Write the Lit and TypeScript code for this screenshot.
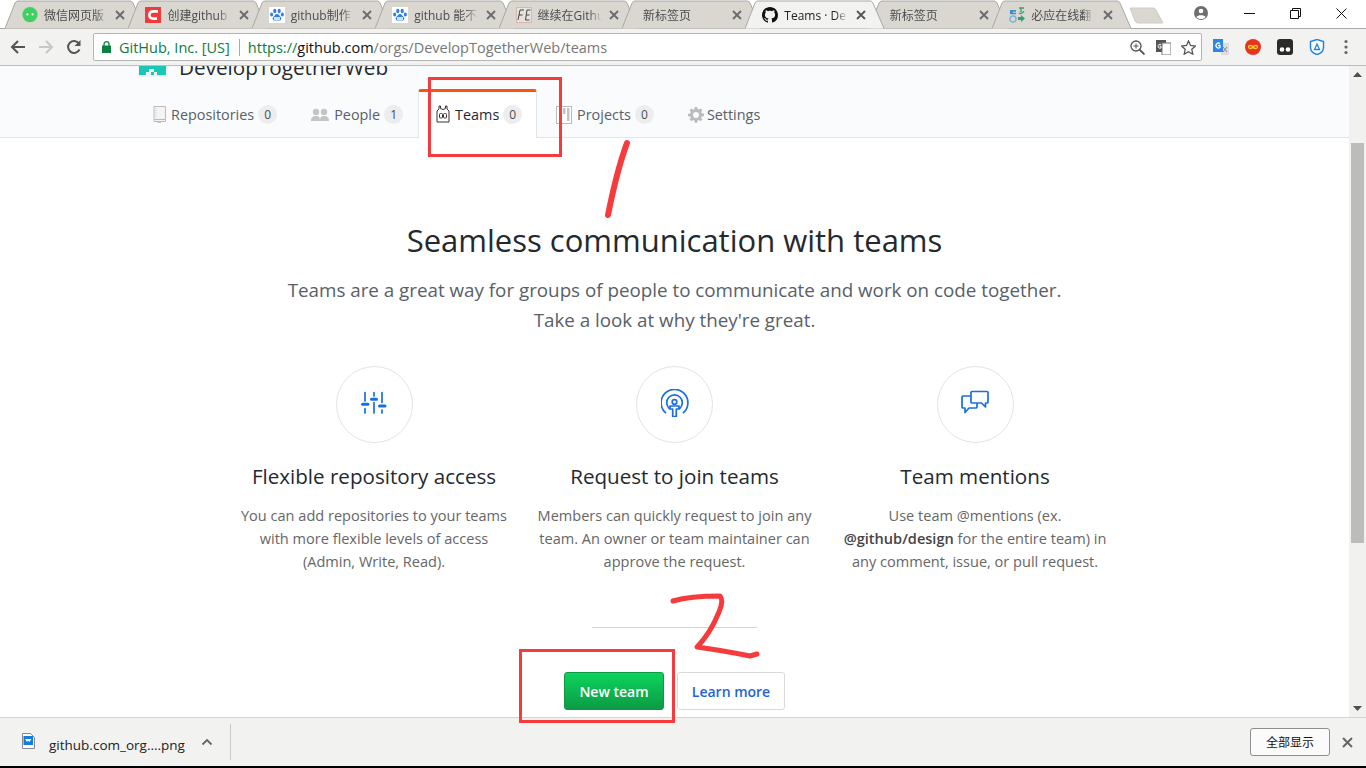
import { LitElement, html, css, svg } from "lit";
import { customElement } from "lit/decorators.js";

const tabs = [
  { title: "微信网页版", icon: "wechat" },
  { title: "创建github", icon: "csdn" },
  { title: "github制作", icon: "baidu" },
  { title: "github 能不", icon: "baidu" },
  { title: "继续在Github", icon: "fe" },
  { title: "新标签页", icon: "" },
  { title: "Teams · De", icon: "github", active: true },
  { title: "新标签页", icon: "" },
  { title: "必应在线翻", icon: "bing" },
];

const features = [
  {
    icon: "sliders",
    title: "Flexible repository access",
    lines: [
      "You can add repositories to your teams",
      "with more flexible levels of access",
      "(Admin, Write, Read).",
    ],
  },
  {
    icon: "person",
    title: "Request to join teams",
    lines: [
      "Members can quickly request to join any",
      "team. An owner or team maintainer can",
      "approve the request.",
    ],
  },
  {
    icon: "chat",
    title: "Team mentions",
    lines: [
      "Use team @mentions (ex.",
      html`<b>@github/design</b> for the entire team) in`,
      "any comment, issue, or pull request.",
    ],
  },
];

function favicon(name: string) {
  switch (name) {
    case "wechat":
      return html`<svg width="16" height="16" viewBox="0 0 16 16"><circle cx="8" cy="7.6" r="7.6" fill="#3fd15f"/><path d="M3 14l1-4 3 3z" fill="#3fd15f"/><circle cx="5.4" cy="7.4" r="1.1" fill="#fff"/><circle cx="10.6" cy="7.4" r="1.1" fill="#fff"/></svg>`;
    case "csdn":
      return html`<svg width="16" height="16" viewBox="0 0 16 16"><rect width="16" height="16" fill="#ee3b3b"/><path d="M13 4.4H8.5C6 4.4 4.4 6 4.4 8s1.6 3.6 4.1 3.6H12" fill="none" stroke="#fff" stroke-width="2.6"/></svg>`;
    case "baidu":
      return html`<svg width="16" height="16" viewBox="0 0 16 16"><rect width="16" height="16" fill="#fff"/><g fill="#2f7fe6"><ellipse cx="5.8" cy="4" rx="1.6" ry="2.2"/><ellipse cx="10.2" cy="4" rx="1.6" ry="2.2"/><ellipse cx="2.6" cy="7.6" rx="1.5" ry="2"/><ellipse cx="13.4" cy="7.6" rx="1.5" ry="2"/><path d="M8 7c-2 0-2.4 2-3.6 3-1.4 1.2-.6 3.8 1.6 3.6 1-.1 1.400-.4 2-.4s1 .3 2 .4c2.200.2 3-2.400 1.600-3.600C10.400 9 10 7 8 7z"/></g><rect x="5" y="10" width="6" height="3" fill="#cfe2fa"/></svg>`;
    case "fe":
      return html`<svg width="16" height="16" viewBox="0 0 16 16"><rect x=".5" y=".5" width="15" height="15" fill="#e6e2dc" stroke="#d8b5ae"/><path d="M2 13L4 3h4M3 8h3.500M9.500 13l1.500-10h3.500M10.500 8h3M9.500 13h4" fill="none" stroke="#444" stroke-width="1"/></svg>`;
    case "github":
      return html`<svg width="16" height="16" viewBox="0 0 16 16"><path fill="#111" d="M8 0C3.580 0 0 3.580 0 8c0 3.540 2.290 6.530 5.470 7.590.4.070.55-.170.55-.380 0-.190-.010-.820-.010-1.490-2.010.370-2.530-.490-2.690-.940-.090-.230-.480-.940-.820-1.130-.280-.150-.680-.520-.010-.530.630-.010 1.080.580 1.230.820.720 1.210 1.870.870 2.330.660.070-.520.280-.870.510-1.070-1.780-.200-3.640-.890-3.640-3.950 0-.870.310-1.590.820-2.150-.080-.200-.360-1.020.080-2.120 0 0 .670-.210 2.200.820.640-.180 1.320-.270 2-.270s1.360.090 2 .270c1.530-1.040 2.200-.820 2.200-.820.440 1.100.160 1.920.080 2.120.510.560.820 1.270.820 2.150 0 3.070-1.870 3.750-3.650 3.950.290.250.540.730.540 1.480 0 1.070-.010 1.930-.010 2.200 0 .210.150.460.550.380A8.010 8.010 0 0 0 16 8c0-4.420-3.580-8-8-8z"/></svg>`;
    case "bing":
      return html`<svg width="16" height="16" viewBox="0 0 16 16"><path d="M1 3h6v1.800H4v1h3v1.500H1z" fill="#3f8fd0"/><circle cx="4" cy="12" r="3" fill="none" stroke="#7fb5d8" stroke-width="1.500"/><path d="M10 1h5M12 1v4M10 6c2 1 4 0 5-2" fill="none" stroke="#35a06a" stroke-width="1.300"/><path d="M9 10h3V8l4 3.500-4 3.500v-2H9z" fill="#35a06a"/></svg>`;
  }
  return "";
}

const featureIcons: Record<string, unknown> = {
  sliders: svg`<g stroke="#1a6fdf" stroke-width="1.700" stroke-linecap="round" fill="none">
    <path d="M5 3.500V12M5 19.500V24M14 3.500V7M14 13.500V24M22 3.500V13.500M22 21V24"/>
    <path stroke-width="3" d="M2.500 15.300h5.500M11.500 10.300h5M19.500 17h5.500"/></g>`,
  person: svg`<g stroke="#1a6fdf" stroke-width="1.700" fill="none" stroke-linecap="round">
    <path d="M4.500 23.700A13.400 13.400 0 1 1 22.500 23.700"/>
    <path d="M8.300 19.500A7.800 7.800 0 1 1 18.700 19.500"/>
    <circle cx="13.500" cy="13" r="2.300"/>
    <path stroke-linejoin="round" d="M9 17h9v3h-2.700v7.500h-3.600v-7.500H9z" fill="#fff"/></g>`,
  chat: svg`<g stroke="#1a6fdf" stroke-width="1.700" fill="#fff" stroke-linejoin="round">
    <path d="M2 7h13a1 1 0 0 1 1 1v10a1 1 0 0 1-1 1H8l-4 4.500V19H2a1 1 0 0 1-1-1V8a1 1 0 0 1 1-1z"/>
    <path d="M11 2.500h15a1 1 0 0 1 1 1v9.500a1 1 0 0 1-1 1h-1.500v4l-4-4H11a1 1 0 0 1-1-1V3.500a1 1 0 0 1 1-1z"/></g>`,
};

@customElement("app-root")
export class AppRoot extends LitElement {
  static styles = css`
    :host {
      display: block;
      position: relative;
      width: 1366px;
      height: 768px;
      overflow: hidden;
      background: #fff;
      font-family: "Open Sans", "Noto Sans CJK SC", sans-serif;
    }
    .frame {
      display: flex;
      flex-direction: column;
      height: 768px;
    }

    /* tab strip */
    .strip {
      height: 28px;
      display: flex;
      padding-left: 11px;
      position: relative;
      flex: none;
    }
    .tab {
      position: relative;
      width: 123.4px;
      height: 28px;
      flex: none;
      display: flex;
      align-items: center;
      font-size: 12px;
      color: #4c4c4c;
    }
    .tab.active {
      color: #222;
      z-index: 2;
    }
    .shape {
      position: absolute;
      left: -6px;
      top: 0;
    }
    .fav {
      position: relative;
      width: 16px;
      height: 16px;
      margin-left: 11px;
      margin-right: 6px;
      margin-top: 2px;
    }
    .fav.none {
      width: 0;
      margin-right: 0;
    }
    .tab-title {
      position: relative;
      width: 64px;
      white-space: nowrap;
      overflow: hidden;
      margin-top: 2px;
      -webkit-mask-image: linear-gradient(90deg, #000 80%, transparent);
      mask-image: linear-gradient(90deg, #000 80%, transparent);
    }
    .fav.none + .tab-title {
      width: 86px;
      margin-left: 4px;
    }
    .tab-x {
      position: absolute;
      right: 9px;
      top: 10px;
    }
    .new-tab {
      margin: 7px 0 0 7px;
    }
    .win {
      position: absolute;
      top: 0;
      right: 2px;
      display: flex;
      align-items: center;
      height: 26px;
    }
    .win-btn {
      width: 46px;
      display: flex;
      justify-content: center;
    }
    .avatar {
      margin-right: 17px;
    }

    /* toolbar */
    .bar {
      height: 38px;
      flex: none;
      display: flex;
      align-items: center;
      background: #f2f2f0;
      border-top: 1px solid #a9a8a4;
      border-bottom: 1px solid #bdbdbb;
      box-sizing: border-box;
      padding-left: 10px;
    }
    .nav {
      display: flex;
      gap: 12px;
      width: 83px;
      align-items: center;
    }
    .omni {
      width: 1109px;
      height: 28px;
      box-sizing: border-box;
      background: #fff;
      border: 1px solid #b5b5b3;
      border-radius: 2px;
      display: flex;
      align-items: center;
      font-size: 14.5px;
      padding-left: 8px;
      white-space: nowrap;
    }
    .secure {
      color: #0b7d3e;
      margin-left: 8px;
    }
    .sep {
      width: 1px;
      height: 17px;
      background: #aaa;
      margin: 0 8px 0 9px;
    }
    .url {
      color: #0b7d3e;
    }
    .url b {
      font-weight: 400;
      color: #111;
    }
    .url span {
      color: #777;
    }
    .omni-icons {
      margin-left: auto;
      display: flex;
      align-items: center;
      gap: 10.5px;
      padding-right: 5px;
    }
    .exts {
      display: flex;
      align-items: center;
      gap: 16px;
      margin-left: 11px;
    }
    .menu {
      margin-left: 3px;
    }

    /* page */
    .viewport {
      flex: 1;
      display: flex;
      min-height: 0;
    }
    .page {
      flex: 1;
      overflow: hidden;
      color: #24292e;
    }
    .orghead {
      height: 72px;
      box-sizing: border-box;
      background: #fafbfc;
      border-bottom: 1px solid #e1e4e8;
      padding-left: 138px;
      display: flex;
      flex-direction: column;
    }
    .orgname {
      display: flex;
      gap: 11px;
      height: 23px;
      overflow: hidden;
      font-size: 20.7px;
      line-height: 28px;
      flex: none;
    }
    .orgname svg {
      flex: none;
      margin-left: -1px;
    }
    .orgname span {
      margin-top: -13px;
      height: 30px;
    }
    .orgtabs {
      display: flex;
      height: 48px;
      flex: none;
    }
    .otab {
      display: flex;
      align-items: center;
      gap: 5px;
      font-size: 14.4px;
      color: #586069;
      padding: 3px 0 0 14px;
      margin-right: 20px;
      white-space: nowrap;
    }
    .otab:first-child {
      padding-left: 15px;
    }
    .otab.sel {
      background: #fff;
      border: 1px solid #e1e4e8;
      border-top: 3px solid #f9540b;
      border-bottom: 0;
      border-radius: 3px 3px 0 0;
      color: #24292e;
      width: 119px;
      box-sizing: border-box;
      height: 49px;
      padding: 0 0 2px 17px;
      margin: 0 5px 0 -5px;
    }
    .otab svg {
      flex: none;
    }
    .gear {
      margin-right: -2px;
    }
    .count {
      min-width: 19px;
      height: 19px;
      box-sizing: border-box;
      border-radius: 10px;
      background: #ededed;
      font-size: 12px;
      line-height: 19px;
      text-align: center;
      margin-left: -1px;
      color: #444d56;
    }
    .blank {
      text-align: center;
    }
    h1 {
      margin: 0;
      padding-top: 82px;
      font-size: 31px;
      font-weight: 400;
      line-height: 40px;
    }
    .lead {
      margin: 15px 0 0;
      font-size: 18.8px;
      line-height: 30px;
      color: #586069;
    }
    .features {
      display: flex;
      justify-content: center;
      margin-top: 31px;
    }
    .feature {
      width: 300.5px;
    }
    .circle {
      width: 77px;
      height: 77px;
      box-sizing: border-box;
      margin: 0 auto;
      border: 1px solid #e1e4e8;
      border-radius: 50%;
      display: flex;
      align-items: center;
      justify-content: center;
    }
    .circle svg {
      margin-bottom: 3px;
    }
    h3 {
      margin: 18px 0 0;
      font-size: 20.6px;
      font-weight: 400;
      line-height: 30px;
    }
    .desc {
      margin: 13px 0 0;
      font-size: 14.55px;
      line-height: 23px;
      color: #666;
      white-space: nowrap;
    }
    .desc b {
      font-weight: 600;
      color: #444;
    }
    hr {
      width: 165px;
      margin: 54px auto 0;
      border: 0;
      border-top: 1px solid #d1d5da;
    }
    .actions {
      display: flex;
      justify-content: center;
      gap: 13px;
      margin-top: 44px;
    }
    .btn {
      height: 38px;
      box-sizing: border-box;
      border-radius: 3px;
      font: 600 14px "Open Sans", sans-serif;
      display: flex;
      align-items: center;
      justify-content: center;
    }
    .primary {
      width: 100px;
      color: #fff;
      background: linear-gradient(#0ed35c, #0b9b45);
      border: 1px solid #0a9a44;
    }
    .secondary {
      width: 108px;
      color: #1f62d6;
      background: #fff;
      border: 1px solid #d8dade;
    }

    .scrollbar {
      width: 17px;
      flex: none;
      background: #f1f1ef;
      display: flex;
      flex-direction: column;
      align-items: center;
    }
    .arrow {
      height: 17px;
      flex: none;
      display: flex;
      align-items: center;
    }
    .thumb {
      width: 13px;
      height: 400px;
      background: #bcbcba;
      margin-top: 60px;
      margin-bottom: auto;
    }

    /* download shelf */
    .shelf {
      height: 51px;
      flex: none;
      box-sizing: border-box;
      background: #f2f2f0;
      border-top: 1px solid #d4d4d2;
      border-bottom: 2px solid #000;
      display: flex;
      align-items: center;
      font-size: 13.5px;
      color: #222;
    }
    .file {
      margin: -2px 0 0 22px;
    }
    .fname {
      margin: 5px 0 0 14px;
      width: 149px;
      white-space: nowrap;
    }
    .chev {
      margin-left: 3px;
    }
    .shelf-sep {
      width: 1px;
      height: 36px;
      background: #c9c9c6;
      margin-left: 17px;
    }
    .showall {
      margin-left: auto;
      width: 80px;
      height: 28px;
      box-sizing: border-box;
      border: 1px solid #8e8e8e;
      border-radius: 3px;
      background: #fbfbfb;
      display: flex;
      align-items: center;
      justify-content: center;
      font-size: 12px;
      color: #111;
    }
    .shelf-x {
      margin: 0 13px 0 12px;
    }

    /* red marks drawn over the screenshot */
    .marks {
      position: absolute;
      inset: 0;
      pointer-events: none;
    }
  `;

  private renderTab(t: (typeof tabs)[number]) {
    const fill = t.active ? "#f2f2f0" : "#dad7d0";
    return html`<div class="tab ${t.active ? "active" : ""}">
      <svg class="shape" width="140" height="29" viewBox="0 0 140 29">
        <path d="M0 28.500 L10 3 Q11 1 13 1 H125 Q127 1 128 3 L139 28.500" fill="${fill}" stroke="#a9a8a4"/>
      </svg>
      <div class="fav ${t.icon ? "" : "none"}">${favicon(t.icon)}</div>
      <div class="tab-title">${t.title}</div>
      <svg class="tab-x" width="10" height="10" viewBox="0 0 10 10">
        <path d="M1 1l8 8M9 1l-8 8" stroke="${t.active ? "#555" : "#6a6a6a"}" stroke-width="1.800"/>
      </svg>
    </div>`;
  }

  render() {
    return html`
      <div class="frame">
        <div class="strip">
          ${tabs.map((t) => this.renderTab(t))}
          <svg class="new-tab" width="36" height="18" viewBox="0 0 36 18">
            <path d="M1 1h23q2 0 3 2l7 13H9q-2 0-3-2z" fill="#dad7d0" stroke="#cfccc6"/>
          </svg>
          <div class="win">
            <svg class="avatar" width="16" height="16" viewBox="0 0 16 16">
              <circle cx="8" cy="8" r="7" fill="#6e6e6e"/>
              <circle cx="8" cy="6" r="2.300" fill="#fff"/>
              <path d="M3.500 12c1-2.200 8-2.200 9 0-1 1.500-2.500 2-4.500 2s-3.500-.500-4.500-2z" fill="#fff"/>
            </svg>
            <div class="win-btn">
              <svg width="11" height="11" viewBox="0 0 11 11"><path d="M0 5.500h11" stroke="#111"/></svg>
            </div>
            <div class="win-btn">
              <svg width="11" height="11" viewBox="0 0 11 11"><path d="M.5 2.500h8v8h-8zM2.500 2.500v-2h8v8h-2" fill="none" stroke="#111"/></svg>
            </div>
            <div class="win-btn">
              <svg width="11" height="11" viewBox="0 0 11 11"><path d="M.5.500l10 10M10.500.500l-10 10" stroke="#111"/></svg>
            </div>
          </div>
        </div>

        <div class="bar">
          <div class="nav">
            <svg width="16" height="16" viewBox="0 0 16 16"><path d="M15 8H2M8 2L2 8l6 6" fill="none" stroke="#555" stroke-width="2"/></svg>
            <svg width="16" height="16" viewBox="0 0 16 16"><path d="M1 8h13M8 2l6 6-6 6" fill="none" stroke="#c8c8c8" stroke-width="2"/></svg>
            <svg width="16" height="16" viewBox="0 0 16 16"><path d="M13.500 10.500A6 6 0 1 1 13 4.500" fill="none" stroke="#555" stroke-width="2"/><path d="M14.500 1v6h-6z" fill="#555"/></svg>
          </div>
          <div class="omni">
            <svg width="9" height="12" viewBox="0 0 9 12"><rect y="4.500" width="9" height="7.500" fill="#0b8043"/><path d="M2 5V3.200a2.500 2.500 0 0 1 5 0V5" fill="none" stroke="#0b8043" stroke-width="1.300"/></svg>
            <span class="secure">GitHub, Inc. [US]</span>
            <i class="sep"></i>
            <span class="url">https://<b>github.com</b><span>/orgs/DevelopTogetherWeb/teams</span></span>
            <div class="omni-icons">
              <svg width="15" height="15" viewBox="0 0 15 15"><circle cx="6" cy="6" r="5" fill="none" stroke="#555" stroke-width="1.300"/><path d="M9.500 9.500l5 5" stroke="#555" stroke-width="1.800"/><path d="M3.500 6h5M6 3.500v5" stroke="#555"/></svg>
              <svg width="15" height="15" viewBox="0 0 15 15"><rect width="10" height="12" fill="#555"/><rect x="6" y="3" width="9" height="12" fill="#fff" stroke="#777"/><path d="M5 4.500a2 2 0 1 0 0 3.500V6.200H3.500" fill="none" stroke="#fff"/></svg>
              <svg width="15" height="15" viewBox="0 0 15 15"><path d="M7.500 1l2 4.500 5 .5-3.700 3.300 1 4.900-4.300-2.500-4.300 2.500 1-4.900L.5 6l5-.5z" fill="none" stroke="#555" stroke-width="1.300"/></svg>
            </div>
          </div>
          <div class="exts">
            <svg width="16" height="16" viewBox="0 0 16 16"><path d="M6 4h10v12H8z" fill="#ddd"/><path d="M10 8l4 5M14 8l-4 5" stroke="#888"/><rect width="10" height="13" fill="#2d85e8"/><path d="M7 4.500a2.500 2.500 0 1 0 0 4V6.500H5" fill="none" stroke="#fff" stroke-width="1.300"/></svg>
            <svg width="16" height="16" viewBox="0 0 16 16"><circle cx="8" cy="8" r="8" fill="#e8331f"/><path d="M8 8c-1-2-4.500-2-4.500 0s3.500 2 4.500 0 4.500-2 4.500 0-3.500 2-4.500 0z" fill="none" stroke="#f9d423" stroke-width="1.300"/></svg>
            <svg width="16" height="16" viewBox="0 0 16 16"><rect width="16" height="16" rx="3" fill="#2b2b2b"/><circle cx="5" cy="10.500" r="2.300" fill="#fff"/><circle cx="11" cy="10.500" r="2.300" fill="#fff"/></svg>
            <svg width="16" height="16" viewBox="0 0 16 16"><path d="M8 .500l6.500 2v6c0 3.500-3 6-6.500 7-3.500-1-6.500-3.500-6.500-7v-6z" fill="#fff" stroke="#1f86e0" stroke-width="1.500"/><path d="M5.500 10.500L8 5l2.500 5.500z" fill="none" stroke="#1f86e0" stroke-width="1.300"/></svg>
            <svg class="menu" width="4" height="16" viewBox="0 0 4 16"><g fill="#666"><circle cx="2" cy="2.500" r="1.600"/><circle cx="2" cy="8" r="1.600"/><circle cx="2" cy="13.500" r="1.600"/></g></svg>
          </div>
        </div>

        <div class="viewport">
          <div class="page">
            <div class="orghead">
              <div class="orgname">
                <svg width="31" height="11" viewBox="0 0 31 11"><rect width="31" height="11" fill="#f0f1f1"/><path d="M2 0h27v9h-9V6h-3V3h-5v3h-3v3H2z" fill="#17c8b6"/><rect x="14" y="6" width="3" height="3" fill="#17c8b6"/></svg>
                <span>DevelopTogetherWeb</span>
              </div>
              <div class="orgtabs">
                <div class="otab">
                  <svg width="13" height="17" viewBox="0 0 13 17"><path d="M1 .5h11.500v13H1zM1 13.500v2h11.500v-2M5 15.500v1.500l1.200-.8 1.200.8v-1.500" fill="#f4f4f4" stroke="#bbb"/><path d="M3 2v10" stroke="#ccc" stroke-dasharray="1 1"/></svg>
                  Repositories <span class="count">0</span>
                </div>
                <div class="otab">
                  <svg width="18" height="14" viewBox="0 0 18 14"><g fill="#c4c4c4"><circle cx="5" cy="4" r="3.200"/><circle cx="13" cy="4" r="3.200"/><path d="M0 13c0-3 1.500-5 5-5s4 2 4 5zM9 13c0-3 .5-5 4-5s5 2 5 5z"/></g></svg>
                  People <span class="count">1</span>
                </div>
                <div class="otab sel">
                  <svg width="14" height="18" viewBox="0 0 14 18"><path d="M3 1v3L1 6v11h12V6l-2-2V1H9.500v2.500q-2.500 2-5 0V1z" fill="#fff" stroke="#333"/><rect x="3.500" y="8.500" width="3" height="4.500" rx="1" fill="none" stroke="#333"/><rect x="7.500" y="8.500" width="3" height="4.500" rx="1" fill="none" stroke="#333"/></svg>
                  Teams <span class="count">0</span>
                </div>
                <div class="otab">
                  <svg width="16" height="18" viewBox="0 0 16 18"><rect x=".5" y=".5" width="15" height="17" fill="#fff" stroke="#bbb"/><path d="M3 2h3v10H3zM7 2h2.500v6H7zM11 2h2.500v13H11z" fill="#c4c4c4"/></svg>
                  Projects <span class="count">0</span>
                </div>
                <div class="otab">
                  <svg class="gear" width="16" height="16" viewBox="0 0 16 16"><path fill="#bbb" fill-rule="evenodd" d="M6.800 0h2.400l.4 2.100 1.300.5 1.800-1.200 1.700 1.700-1.200 1.800.5 1.300 2.300.4v2.400l-2.300.4-.5 1.300 1.200 1.800-1.700 1.700-1.800-1.200-1.300.5-.4 2.300H6.800l-.4-2.300-1.300-.5-1.800 1.200-1.700-1.700 1.200-1.800-.5-1.300L0 9.200V6.800l2.300-.4.500-1.300-1.200-1.800 1.700-1.700 1.800 1.200 1.300-.5zM8 5a3 3 0 1 0 0 6 3 3 0 0 0 0-6z"/></svg>
                  Settings
                </div>
              </div>
            </div>

            <div class="blank">
              <h1>Seamless communication with teams</h1>
              <p class="lead">
                Teams are a great way for groups of people to communicate and work on code together.<br />
                Take a look at why they're great.
              </p>
              <div class="features">
                ${features.map(
                  (f) => html`<div class="feature">
                    <div class="circle">
                      <svg width="28" height="28" viewBox="0 0 28 28">${featureIcons[f.icon]}</svg>
                    </div>
                    <h3>${f.title}</h3>
                    <p class="desc">${f.lines.map((l) => html`${l}<br />`)}</p>
                  </div>`
                )}
              </div>
              <hr />
              <div class="actions">
                <div class="btn primary">New team</div>
                <div class="btn secondary">Learn more</div>
              </div>
            </div>
          </div>
          <div class="scrollbar">
            <div class="arrow">
              <svg width="9" height="5" viewBox="0 0 9 5"><path d="M0 5h9L4.500 0z" fill="#505050"/></svg>
            </div>
            <div class="thumb"></div>
            <div class="arrow">
              <svg width="9" height="5" viewBox="0 0 9 5"><path d="M0 0h9L4.500 5z" fill="#505050"/></svg>
            </div>
          </div>
        </div>

        <div class="shelf">
          <svg class="file" width="13" height="16" viewBox="0 0 13 16"><path d="M.5.500h8l4 4v11H.5z" fill="#fff" stroke="#888"/><rect x="1.500" y="3" width="9.500" height="9" fill="#0f7ee0"/><path d="M3 6h6.500L7.500 9 6 7.500 5 9z" fill="#fff"/></svg>
          <span class="fname">github.com_org....png</span>
          <svg class="chev" width="12" height="8" viewBox="0 0 12 8"><path d="M1.500 6.500L6 2l4.500 4.500" fill="none" stroke="#666" stroke-width="1.800"/></svg>
          <i class="shelf-sep"></i>
          <div class="showall">全部显示</div>
          <svg class="shelf-x" width="11" height="11" viewBox="0 0 11 11"><path d="M1 1l9 9M10 1l-9 9" stroke="#666" stroke-width="2"/></svg>
        </div>
      </div>

      <svg class="marks" width="1366" height="768" viewBox="0 0 1366 768" fill="none" stroke="#f53b3b">
        <rect x="429.500" y="78.500" width="131" height="77" stroke-width="3"/>
        <rect x="520.500" y="650.500" width="153" height="71" stroke-width="3"/>
        <path d="M627 143Q617 170 608 215" stroke-width="6" stroke-linecap="round"/>
        <path d="M673 601Q690 596 720 596Q724 600 719 612Q710 634 697 647Q720 650 750 656L757 654" stroke-width="5" stroke-linecap="round" stroke-linejoin="round"/>
      </svg>
    `;
  }
}
